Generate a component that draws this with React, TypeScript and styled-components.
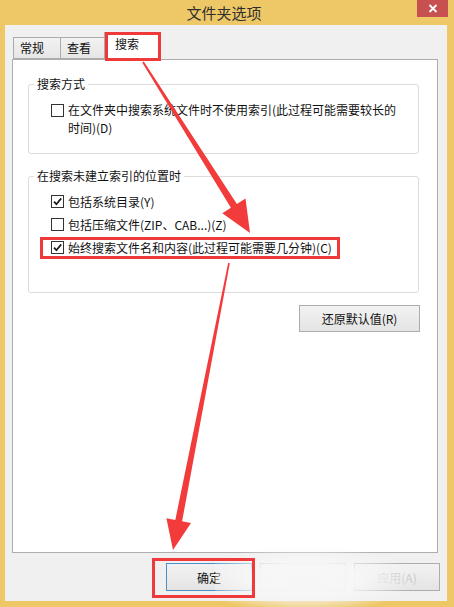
import React from "react";
import styled, { createGlobalStyle } from "styled-components";

const GlobalStyle = createGlobalStyle`
  html, body { margin: 0; padding: 0; }
  body {
    font-family: "Noto Sans CJK SC", "Noto Sans", "Liberation Sans", sans-serif;
    font-size: 12px;
    color: #111;
  }
`;

const Window = styled.div`
  position: relative;
  width: 454px;
  height: 607px;
  background: #eec867;
  display: flex;
  flex-direction: column;
  box-sizing: border-box;
  overflow: hidden;
`;

const TitleBar = styled.div`
  height: 25px;
  display: grid;
  grid-template-columns: 1fr auto 1fr;
  align-items: start;
  padding-right: 6px;
  flex-shrink: 0;
`;

const Title = styled.div`
  grid-column: 2;
  font-size: 15px;
  line-height: 25px;
  color: #2e2e2e;
`;

const CloseButton = styled.div`
  grid-column: 3;
  justify-self: end;
  width: 31px;
  height: 17px;
  background: #c75050;
  display: flex;
  align-items: center;
  justify-content: center;
`;

const Client = styled.div`
  flex: 1;
  margin: 0 7px 6px 5px;
  background: #f0f0f0;
  display: flex;
  flex-direction: column;
  padding: 8px 7px 10px 7px;
  min-height: 0;
`;

const TabStrip = styled.div`
  height: 26px;
  display: flex;
  align-items: flex-end;
  padding-left: 1px;
  flex-shrink: 0;
`;

const Tab = styled.div<{ $w: number; $active?: boolean }>`
  width: ${(p) => p.$w}px;
  box-sizing: border-box;
  height: ${(p) => (p.$active ? 28 : 22)}px;
  margin: ${(p) => (p.$active ? "0 -1px -1px -2px" : "0")};
  padding-left: ${(p) => (p.$active ? 10 : 6)}px;
  border: 1px solid #acacac;
  border-bottom: ${(p) => (p.$active ? "none" : "1px solid #acacac")};
  background: ${(p) => (p.$active ? "#ffffff" : "linear-gradient(#f2f2f2, #e6e6e6)")};
  font-size: 12px;
  line-height: ${(p) => (p.$active ? 22 : 19)}px;
  color: #111;
  position: relative;
  z-index: ${(p) => (p.$active ? 2 : 1)};
  & + & { margin-left: ${(p) => (p.$active ? -2 : -1)}px; }
`;

const TabPanel = styled.div`
  flex: 1;
  background: #ffffff;
  border: 1px solid #adadad;
  margin-right: 2px;
  padding: 24px 18px 0 15px;
  display: flex;
  flex-direction: column;
  position: relative;
  z-index: 1;
`;

const GroupBox = styled.div<{ $pb: number; $mt: number }>`
  border: 1px solid #dcdcdc;
  border-radius: 3px;
  padding: 0 10px ${(p) => p.$pb}px 22px;
  margin-top: ${(p) => p.$mt}px;
  display: flex;
  flex-direction: column;
`;

const GroupTitle = styled.div<{ $gap: number }>`
  align-self: flex-start;
  margin: -9px 0 ${(p) => p.$gap}px -17px;
  padding: 0 3px;
  background: #ffffff;
  line-height: 16px;
  font-size: 12px;
  color: #111;
`;

const OptionRow = styled.div<{ $h: number }>`
  display: flex;
  align-items: ${(p) => (p.$h > 23 ? "flex-start" : "center")};
  min-height: ${(p) => p.$h}px;
  gap: 4px;
`;

const Box = styled.div<{ $top?: number }>`
  width: 13px;
  height: 13px;
  box-sizing: border-box;
  border: 1px solid #333;
  background: #fff;
  flex-shrink: 0;
  display: flex;
  align-items: center;
  justify-content: center;
  margin-top: ${(p) => p.$top ?? 0}px;
`;

const OptionText = styled.div`
  line-height: 18px;
  white-space: nowrap;
  color: #111;
`;

const ResetRow = styled.div`
  display: flex;
  justify-content: flex-end;
  margin-top: 12px;
  margin-right: -1px;
`;

const Button = styled.div<{ $w: number; $h: number; $default?: boolean; $faded?: boolean }>`
  width: ${(p) => p.$w}px;
  height: ${(p) => p.$h}px;
  box-sizing: border-box;
  border: 1px solid ${(p) => (p.$default ? "#4a90c8" : "#acacac")};
  background: linear-gradient(#f2f2f2, #e4e4e4);
  display: flex;
  align-items: center;
  justify-content: center;
  font-size: 12px;
  color: ${(p) => (p.$faded ? "#c8c8c8" : "#111")};
`;

const ButtonRow = styled.div`
  display: flex;
  justify-content: flex-end;
  gap: 8px;
  margin-top: 10px;
  flex-shrink: 0;
`;

const Watermark = styled.div`
  position: absolute;
  left: 215px;
  top: 546px;
  width: 200px;
  height: 66px;
  background: radial-gradient(ellipse at 45% 50%, rgba(247, 247, 247, 0.98) 0%, rgba(247, 247, 247, 0.95) 35%, rgba(247, 247, 247, 0) 72%);
  pointer-events: none;
  z-index: 4;
`;

const Annotations = styled.svg`
  position: absolute;
  left: 0;
  top: 0;
  width: 454px;
  height: 607px;
  pointer-events: none;
  z-index: 5;
`;

const Check = ({ checked }: { checked: boolean }) =>
  checked ? (
    <svg width="11" height="11" viewBox="0 0 11 11">
      <path d="M2 5.6 L4.4 8.2 L9.2 2.4" fill="none" stroke="#1a1a1a" strokeWidth="1.7" />
    </svg>
  ) : null;

const Option = ({ checked, children }: { checked: boolean; children: React.ReactNode }) => (
  <OptionRow $h={23}>
    <Box>
      <Check checked={checked} />
    </Box>
    <OptionText>{children}</OptionText>
  </OptionRow>
);

export default function App() {
  return (
    <>
      <GlobalStyle />
      <Window>
        <TitleBar>
          <Title>文件夹选项</Title>
          <CloseButton>
            <svg width="10" height="9" viewBox="0 0 10 9">
              <path d="M1.5 1 L8.5 8 M8.5 1 L1.5 8" stroke="#fff" strokeWidth="1.8" />
            </svg>
          </CloseButton>
        </TitleBar>
        <Client>
          <TabStrip>
            <Tab $w={49}>常规</Tab>
            <Tab $w={46}>查看</Tab>
            <Tab $w={55} $active>
              搜索
            </Tab>
          </TabStrip>
          <TabPanel>
            <GroupBox $pb={16} $mt={0}>
              <GroupTitle $gap={9}>搜索方式</GroupTitle>
              <OptionRow $h={36}>
                <Box $top={3}>
                  <Check checked={false} />
                </Box>
                <OptionText>
                  在文件夹中搜索系统文件时不使用索引(此过程可能需要较长的
                  <br />
                  时间)(D)
                </OptionText>
              </OptionRow>
            </GroupBox>
            <GroupBox $pb={33} $mt={22}>
              <GroupTitle $gap={6}>在搜索未建立索引的位置时</GroupTitle>
              <Option checked>包括系统目录(Y)</Option>
              <Option checked={false}>包括压缩文件(ZIP、CAB...)(Z)</Option>
              <Option checked>始终搜索文件名和内容(此过程可能需要几分钟)(C)</Option>
            </GroupBox>
            <ResetRow>
              <Button $w={121} $h={27}>还原默认值(R)</Button>
            </ResetRow>
          </TabPanel>
          <ButtonRow>
            <Button $w={86} $h={28} $default>
              确定
            </Button>
            <Button $w={86} $h={28} $faded>
              取消
            </Button>
            <Button $w={86} $h={28} $faded>
              应用(A)
            </Button>
          </ButtonRow>
        </Client>
        <Watermark />
        <Annotations viewBox="0 0 454 607">
          <g fill="none" stroke="#ee3a3a" strokeWidth="3">
            <rect x="106.5" y="33.5" width="53" height="26" />
            <rect x="41.5" y="238.5" width="297" height="19" />
            <rect x="153.5" y="559.5" width="100" height="37" />
          </g>
          <polygon
            fill="#f23b3b"
            points="143.8,61.5 236.9,204.0 245.5,198.5 250,233 222.3,213.3 230.9,207.8 142.2,62.5"
          />
          <polygon
            fill="#f23b3b"
            points="229.8,263.2 182.1,521.3 191,523 173,550 166.4,518.2 175.3,519.9 228.2,262.8"
          />
        </Annotations>
      </Window>
    </>
  );
}
